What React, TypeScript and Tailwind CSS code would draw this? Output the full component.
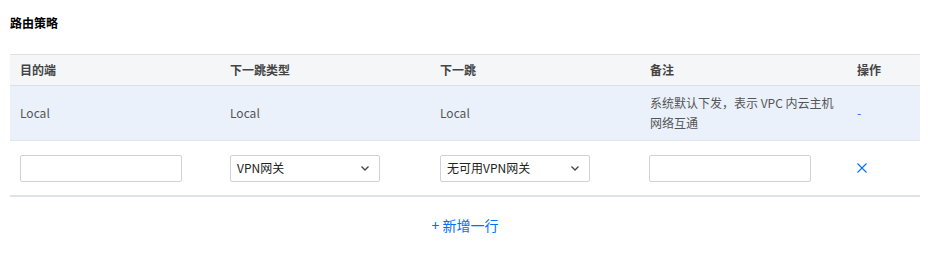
import React from 'react'

const cols = ['w-[210px]', 'w-[210px]', 'w-[210px]', 'w-[210px]', 'w-[70px]']
const pads = ['pl-[10px]', 'pl-[10px]', 'pl-[10px]', 'pl-[10px]', 'pl-[7px]']

const Chevron = () => (
  <svg width="12" height="12" viewBox="0 0 12 12" fill="none">
    <path d="M2.5 4.5L6 8L9.5 4.5" stroke="#444" strokeWidth="1.3" />
  </svg>
)

const Select = ({ value }: { value: string }) => (
  <div className="flex h-[27px] w-[150px] items-center justify-between rounded-[2px] border border-[#cfd2d6] bg-white pl-[6px] pr-[8px] text-[12px] text-[#222]">
    <span>{value}</span>
    <Chevron />
  </div>
)

const Input = () => (
  <div className="h-[27px] w-[162px] rounded-[2px] border border-[#cfd2d6] bg-white" />
)

export default function App() {
  const headers = ['目的端', '下一跳类型', '下一跳', '备注', '操作']

  return (
    <div
      className="h-[263px] w-[932px] bg-white text-[12px] text-[#333]"
      style={{ fontFamily: '"Noto Sans CJK SC", "Noto Sans", sans-serif' }}
    >
      <h2 className="px-[10px] pt-[13px] pb-[21px] text-[12px] font-bold leading-[20px] text-black">
        路由策略
      </h2>

      <div className="mx-[10px] w-[910px]">
        <div className="flex h-[32px] items-center border-y border-[#dcdfe5] bg-[#f5f6f8] font-bold text-[#444]">
          {headers.map((h, i) => (
            <div key={h} className={`${cols[i]} ${pads[i]}`}>
              {h}
            </div>
          ))}
        </div>

        <div className="flex h-[55px] items-center border-b border-[#e1e6ee] bg-[#eaf1fb] text-[#555]">
          <div className={`${cols[0]} pl-[10px]`}>Local</div>
          <div className={`${cols[1]} pl-[10px]`}>Local</div>
          <div className={`${cols[2]} pl-[10px]`}>Local</div>
          <div className={`${cols[3]} pl-[10px] leading-[20px]`}>
            系统默认下发，表示 VPC 内云主机
            <br />
            网络互通
          </div>
          <div className={`${cols[4]} pl-[7px] text-[#006eff]`}>-</div>
        </div>

        <div className="flex h-[56px] items-center border-b-2 border-[#dfe2e8]">
          <div className={`${cols[0]} pl-[10px]`}>
            <Input />
          </div>
          <div className={`${cols[1]} pl-[10px]`}>
            <Select value="VPN网关" />
          </div>
          <div className={`${cols[2]} pl-[10px]`}>
            <Select value="无可用VPN网关" />
          </div>
          <div className={`${cols[3]} pl-[9px]`}>
            <Input />
          </div>
          <div className={`${cols[4]} pl-[7px]`}>
            <svg width="10" height="10" viewBox="0 0 10 10" fill="none">
              <path d="M0.5 0.5L9.5 9.5M9.5 0.5L0.5 9.5" stroke="#006eff" strokeWidth="1.1" />
            </svg>
          </div>
        </div>

        <div className="flex justify-center pt-[17px]">
          <button className="text-[14px] leading-[22px] text-[#006eff]">+ 新增一行</button>
        </div>
      </div>
    </div>
  )
}
